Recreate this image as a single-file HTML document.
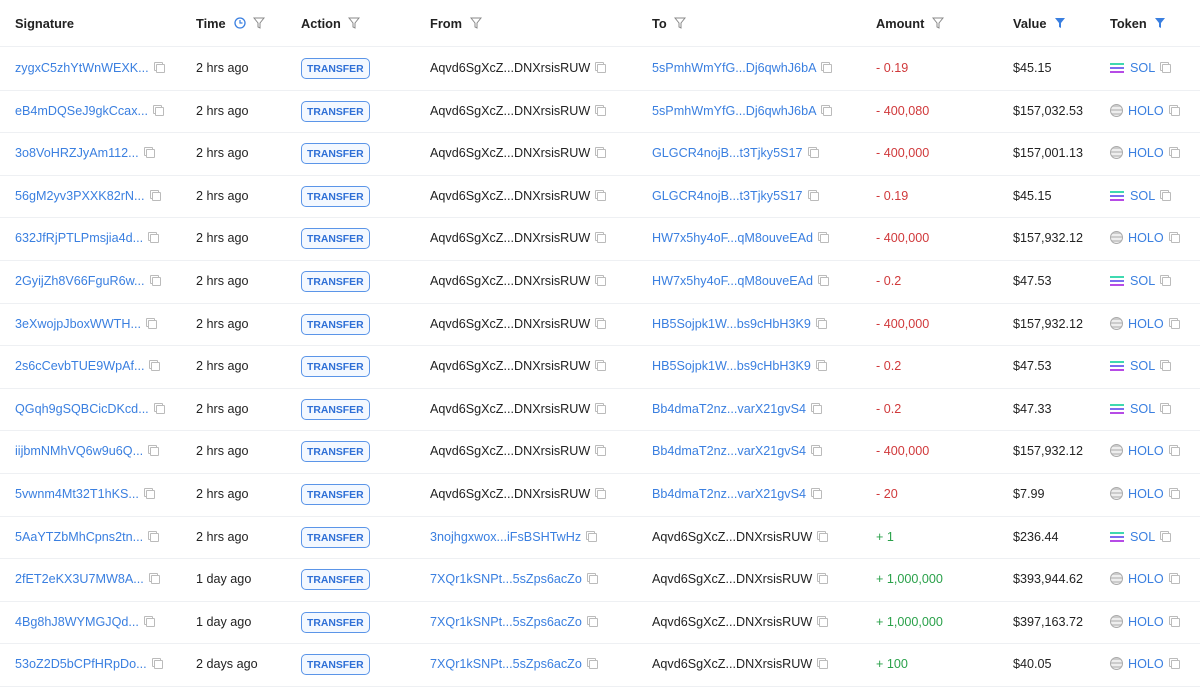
<!DOCTYPE html>
<html><head><style>
body{margin:0;width:1200px;height:682px;overflow:hidden;background:#fff;font-family:"Liberation Sans",sans-serif;font-size:12.6px;color:#222}
.r{position:absolute;left:0;width:1200px;height:42.6px;border-bottom:1px solid #eef0f3}
.c{position:absolute;top:0;line-height:43px;white-space:nowrap}
.h{font-weight:bold;color:#222;font-size:12.8px}
.l{color:#3a7fe0}
.red{color:#d0393b}.grn{color:#2aa14a}
.cp{display:inline-block;width:7px;height:7px;border:1px solid #bbb;border-radius:1px;margin-left:7px;position:relative;top:1px;box-shadow:-2px -2px 0 -1px #fff,-2px -2px 0 0 #bbb}
.tag{position:absolute;left:301px;top:11px;line-height:11px;padding:5px 5px 3px;border:1px solid #5b95e8;border-radius:5px;color:#2e6fd6;background:#f3f8ff;font-size:10.4px;font-weight:bold;white-space:nowrap}
.sol{display:inline-block;width:14px;height:10px;margin-right:6px;vertical-align:-1px;background:linear-gradient(#3fd9b0 0 2px,transparent 2px 4px,#7b6ef0 4px 6px,transparent 6px 8px,#b64be6 8px 10px)}
.holo{display:inline-block;width:11px;height:11px;border-radius:50%;border:1px solid #aaa;background:repeating-linear-gradient(#ccc 0 2px,#eee 2px 4px);margin-right:5px;vertical-align:-2px}
</style></head><body>
<div class="r" style="top:0;height:46px">
<div class="c h" style="left:15px;line-height:47px">Signature</div>
<div class="c h" style="left:196px;line-height:47px">Time <svg width="12" height="12" style="margin-left:5px;vertical-align:-1px"><circle cx="6" cy="6" r="5" fill="none" stroke="#3a7fe0" stroke-width="1.3"/><path d="M6 3v3h2.5" fill="none" stroke="#3a7fe0" stroke-width="1.2"/></svg> <svg width="12" height="12" style="margin-left:3px;vertical-align:-1px"><path d="M1 1h10L7 6v5L5 10V6z" fill="none" stroke="#888"/></svg></div>
<div class="c h" style="left:301px;line-height:47px">Action <svg width="12" height="12" style="margin-left:4px;vertical-align:-1px"><path d="M1 1h10L7 6v5L5 10V6z" fill="none" stroke="#888"/></svg></div>
<div class="c h" style="left:430px;line-height:47px">From <svg width="12" height="12" style="margin-left:4px;vertical-align:-1px"><path d="M1 1h10L7 6v5L5 10V6z" fill="none" stroke="#888"/></svg></div>
<div class="c h" style="left:652px;line-height:47px">To <svg width="12" height="12" style="margin-left:4px;vertical-align:-1px"><path d="M1 1h10L7 6v5L5 10V6z" fill="none" stroke="#888"/></svg></div>
<div class="c h" style="left:876px;line-height:47px">Amount <svg width="12" height="12" style="margin-left:4px;vertical-align:-1px"><path d="M1 1h10L7 6v5L5 10V6z" fill="none" stroke="#888"/></svg></div>
<div class="c h" style="left:1013px;line-height:47px">Value <svg width="12" height="12" style="margin-left:4px;vertical-align:-1px"><path d="M1 1h10L7 6v5L5 10V6z" fill="#3a7fe0"/></svg></div>
<div class="c h" style="left:1110px;line-height:47px">Token <svg width="12" height="12" style="margin-left:4px;vertical-align:-1px"><path d="M1 1h10L7 6v5L5 10V6z" fill="#3a7fe0"/></svg></div>
</div>
<div id="rows"></div>
<script>
var d=[
["zygxC5zhYtWnWEXK...","2 hrs ago","A","5sPmhWmYfG...Dj6qwhJ6bA","- 0.19","$45.15","SOL"],
["eB4mDQSeJ9gkCcax...","2 hrs ago","A","5sPmhWmYfG...Dj6qwhJ6bA","- 400,080","$157,032.53","HOLO"],
["3o8VoHRZJyAm112...","2 hrs ago","A","GLGCR4nojB...t3Tjky5S17","- 400,000","$157,001.13","HOLO"],
["56gM2yv3PXXK82rN...","2 hrs ago","A","GLGCR4nojB...t3Tjky5S17","- 0.19","$45.15","SOL"],
["632JfRjPTLPmsjia4d...","2 hrs ago","A","HW7x5hy4oF...qM8ouveEAd","- 400,000","$157,932.12","HOLO"],
["2GyijZh8V66FguR6w...","2 hrs ago","A","HW7x5hy4oF...qM8ouveEAd","- 0.2","$47.53","SOL"],
["3eXwojpJboxWWTH...","2 hrs ago","A","HB5Sojpk1W...bs9cHbH3K9","- 400,000","$157,932.12","HOLO"],
["2s6cCevbTUE9WpAf...","2 hrs ago","A","HB5Sojpk1W...bs9cHbH3K9","- 0.2","$47.53","SOL"],
["QGqh9gSQBCicDKcd...","2 hrs ago","A","Bb4dmaT2nz...varX21gvS4","- 0.2","$47.33","SOL"],
["iijbmNMhVQ6w9u6Q...","2 hrs ago","A","Bb4dmaT2nz...varX21gvS4","- 400,000","$157,932.12","HOLO"],
["5vwnm4Mt32T1hKS...","2 hrs ago","A","Bb4dmaT2nz...varX21gvS4","- 20","$7.99","HOLO"],
["5AaYTZbMhCpns2tn...","2 hrs ago","3nojhgxwox...iFsBSHTwHz","A","+ 1","$236.44","SOL"],
["2fET2eKX3U7MW8A...","1 day ago","7XQr1kSNPt...5sZps6acZo","A","+ 1,000,000","$393,944.62","HOLO"],
["4Bg8hJ8WYMGJQd...","1 day ago","7XQr1kSNPt...5sZps6acZo","A","+ 1,000,000","$397,163.72","HOLO"],
["53oZ2D5bCPfHRpDo...","2 days ago","7XQr1kSNPt...5sZps6acZo","A","+ 100","$40.05","HOLO"]];
var A="Aqvd6SgXcZ...DNXrsisRUW",h="",cp='<span class="cp"></span>';
d.forEach(function(r,i){var t=47+i*42.6;
function ad(v,x){return '<div class="c'+(v=="A"?'':' l')+'" style="left:'+x+'px">'+(v=="A"?A:v)+cp+'</div>';}
h+='<div class="r" style="top:'+t+'px">'+
'<div class="c l" style="left:15px">'+r[0]+cp+'</div>'+
'<div class="c" style="left:196px">'+r[1]+'</div>'+
'<div class="tag">TRANSFER</div>'+
ad(r[2],430)+ad(r[3],652)+
'<div class="c '+(r[4][0]=="+"?"grn":"red")+'" style="left:876px">'+r[4]+'</div>'+
'<div class="c" style="left:1013px">'+r[5]+'</div>'+
'<div class="c l" style="left:1110px"><span class="'+(r[6]=="SOL"?"sol":"holo")+'"></span>'+r[6]+cp+'</div></div>';});
document.getElementById("rows").innerHTML=h;
</script>
</body></html>
